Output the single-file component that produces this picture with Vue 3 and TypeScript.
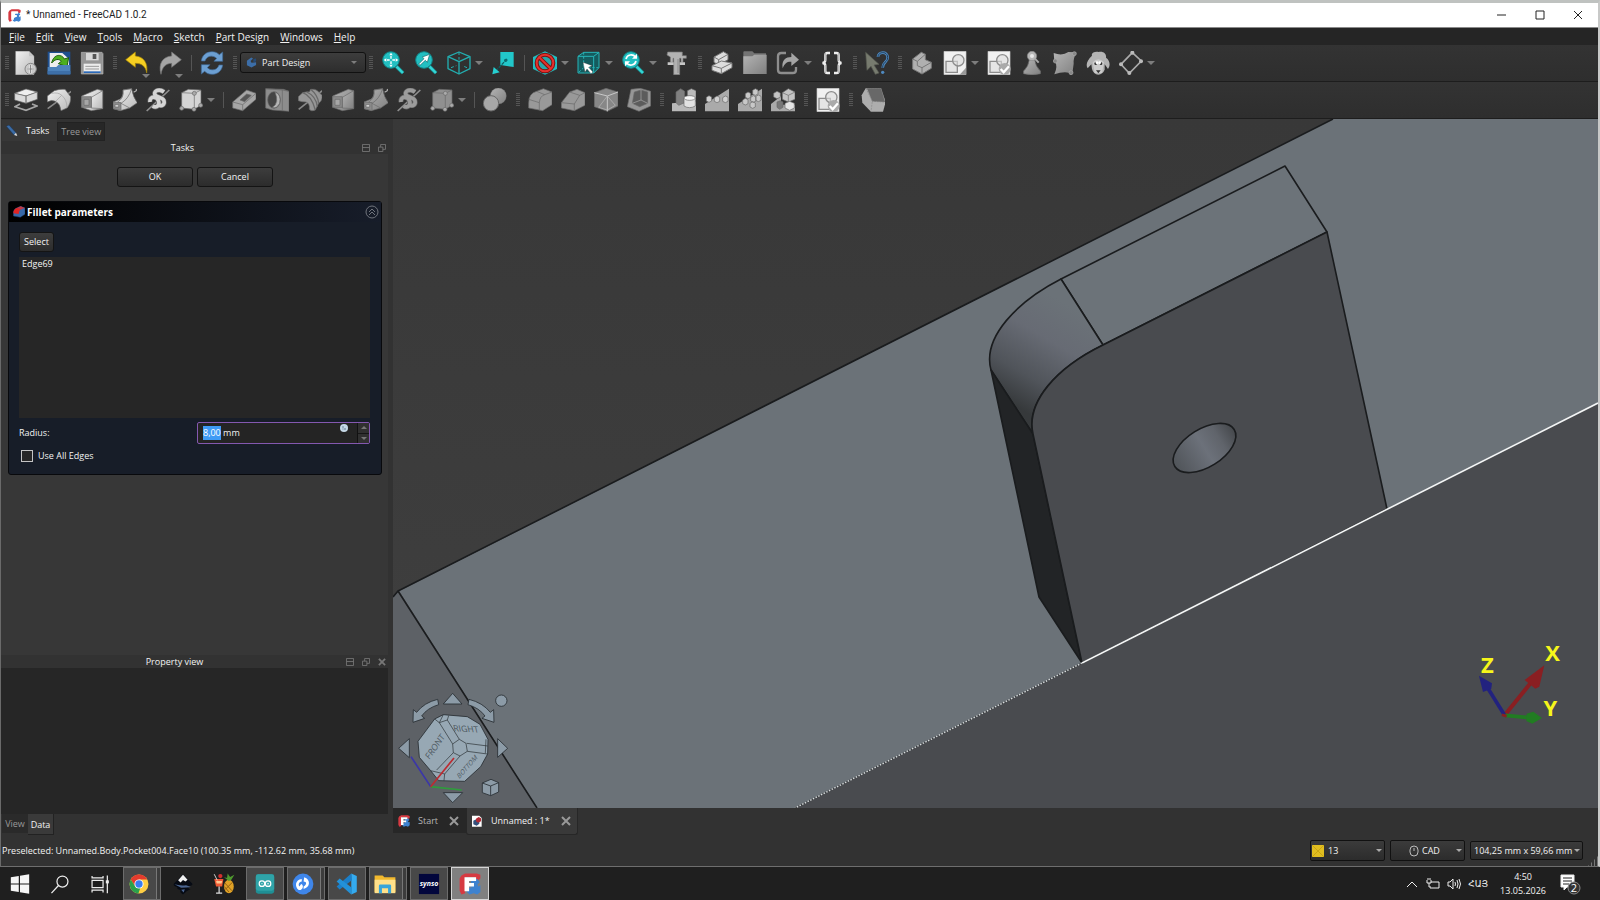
<script setup lang="ts">
import { onMounted, ref } from 'vue'

interface ToolItem {
  kind: 'grip' | 'sep' | 'tool' | 'workbench'
  icon?: string
  label?: string
  menu?: boolean
  under?: boolean
}

const grip: ToolItem = { kind: 'grip' }
const sep: ToolItem = { kind: 'sep' }
const tool = (icon: string, label: string, menu = false, under = false): ToolItem => ({ kind: 'tool', icon, label, menu, under })

const menus = ['File', 'Edit', 'View', 'Tools', 'Macro', 'Sketch', 'Part Design', 'Windows', 'Help']

const rows: ToolItem[][] = [
  [
    grip, tool('new', 'New'), tool('open', 'Open'), tool('save', 'Save'),
    grip, tool('undo', 'Undo', false, true), tool('redo', 'Redo', false, true), sep, tool('refresh', 'Refresh'),
    grip, { kind: 'workbench' },
    grip, tool('fitAll', 'Fit all'), tool('fitSel', 'Fit selection'), tool('iso', 'Isometric', true), tool('align', 'Align to selection'),
    sep, tool('style', 'Draw style', true), tool('selView', 'Selection view', true), tool('sync', 'Sync view', true), tool('caliper', 'Measure'),
    grip, tool('part', 'Create part'), tool('folder', 'Create group'), tool('share', 'Make link', true), tool('braces', 'Variable set'),
    grip, tool('whats', "What's this?"),
    grip, tool('body', 'Create body'), tool('sketch', 'Create sketch', true), tool('validate', 'Validate sketch'), tool('pawn', 'Check geometry'),
    tool('binder', 'Shape binder'), tool('sheep', 'Clone'), tool('datum', 'Datum', true),
  ],
  [
    grip, tool('pad', 'Pad'), tool('revolve', 'Revolution'), tool('loft', 'Additive loft'), tool('pipe', 'Additive pipe'), tool('helix', 'Additive helix'), tool('prim', 'Additive primitive', true),
    sep, tool('pocket', 'Pocket'), tool('hole', 'Hole'), tool('groove', 'Groove'), tool('loftCut', 'Subtractive loft'), tool('pipeCut', 'Subtractive pipe'), tool('helixCut', 'Subtractive helix'), tool('primCut', 'Subtractive primitive', true),
    sep, tool('bool', 'Boolean operation'),
    grip, tool('fillet', 'Fillet'), tool('chamfer', 'Chamfer'), tool('draft', 'Draft'), tool('thick', 'Thickness'),
    grip, tool('mirror', 'Mirrored'), tool('linear', 'Linear pattern'), tool('polar', 'Polar pattern'), tool('multi', 'Multi transform'),
    grip, tool('validate', 'Validate sketch'),
    grip, tool('refine', 'Refine shape'),
  ],
]

const block = (fill: string) =>
  `<g fill="${fill}" stroke="#686868" stroke-width="2">`
const loftShape = (f: string) =>
  `${block(f)}<path d="M5 24L52 4 68 8V62L34 68 5 58z"/><path d="M34 28L68 8V62L34 60z"/><path d="M5 26H34V58H5z" fill="#8a8a8a"/><path d="M12 34H27V52H12z" fill="#a6a6a6"/></g>`
const pipeShape = (f: string) =>
  `${block(f)}<path d="M30 6L56 2Q60 28 73 44L50 60 22 68 0 62V42L20 34Q32 26 30 6z"/><path d="M30 6Q34 30 14 42L24 46Q46 34 56 2z" fill-opacity=".5"/><path d="M24 46L50 60" fill="none"/><path d="M1 42L24 44V68L1 62z" fill="#8b8b8b"/><path d="M6 50H17V57H6z" fill="#ddd"/></g><path d="M62 12Q72 10 70 3" fill="none" stroke="#aaa" stroke-width="4"/>`
const helixBand = 'M54 12C38 0 20 10 28 22C36 30 58 28 54 46C50 56 38 54 36 46M12 42C10 22 34 24 38 40S28 60 20 54'
const helixShape = (f: string) =>
  `<path d="M2 69L70 6" stroke="#909090" stroke-width="5"/><g fill="none"><path d="${helixBand}" stroke="#666" stroke-width="15"/><path d="${helixBand}" stroke="${f}" stroke-width="11"/></g>`
const primShape = (f: string) =>
  `${block(f)}<path d="M8 14L28 4 66 6V52L46 64 8 60z"/><path d="M8 14L46 16 66 6M46 16V64" fill="none"/><circle cx="8" cy="61" r="6" fill="#aaa"/><circle cx="45" cy="64" r="6" fill="#aaa"/><circle cx="65" cy="52" r="6" fill="#aaa"/><circle cx="46" cy="16" r="6" fill="#aaa"/></g>`
const lens = (inner: string) =>
  `<path d="M46 46L66 66" stroke="#158c8e" stroke-width="11"/><path d="M46 46L66 66" stroke="#35d6d6" stroke-width="7"/><circle cx="30" cy="27" r="25" fill="#22bfc1" stroke="#128083" stroke-width="3"/>${inner}`
const page = `<path d="M3 1H69V71H3z" fill="#f1f1f1" stroke="#ccc" stroke-width="2"/><g fill="#ddd" fill-opacity=".6" stroke="#8d8d8d" stroke-width="4"><path d="M9 31H43V64H9z"/><circle cx="46" cy="28" r="17"/></g>`

const icons: Record<string, string> = {
  new: `<path d="M5 1H45L60 16V71H5z" fill="url(#light)" stroke="#bbb"/><path d="M45 1V16H60z" fill="#c5c5c5"/><circle cx="50" cy="54" r="17" fill="#c9c9c9" stroke="#888" stroke-width="3"/><path d="M50 42V66M38 54H62" stroke="#fff" stroke-width="6"/><path d="M50 42V66M38 54H62" stroke="#777" stroke-width="3"/>`,
  open: `<path d="M2 2H70V70H2z" fill="#1e4f8f"/><path d="M8 6H46L66 24V50H8z" fill="#eee"/><path d="M14 36C20 8 44 8 52 24L65 20 60 47 34 38 43 31C36 22 24 24 14 36z" fill="#4caf1f" stroke="#1d5c0c" stroke-width="3"/><path d="M2 48H28L34 42H70V70H2z" fill="#4c82bb"/><path d="M2 60H70V70H2z" fill="#3d6fa8"/>`,
  save: `<path d="M4 4H66L69 8V69H4z" fill="#969696" stroke="#b5b5b5" stroke-width="2"/><path d="M18 6H56V28H18z" fill="#d8d8d8"/><path d="M38 9H49V24H38z" fill="#555"/><path d="M11 38H62V66H11z" fill="#ececec"/><path d="M16 46H57M16 54H57" stroke="#999" stroke-width="3"/><path d="M11 61H62V66H11z" fill="#2b69b8"/>`,
  undo: `<path d="M2 26L31 3V15C56 17 70 36 65 66C62 46 50 37 31 37V49z" fill="#f6cf22" stroke="#a48708" stroke-width="2"/>`,
  redo: `<path d="M70 26L41 3V15C14 17 0 38 9 70C12 48 24 37 41 37V49z" fill="#a5a5a5" stroke="#777" stroke-width="2"/>`,
  refresh: `<g fill="#6c9fd2" stroke="#3f6894" stroke-width="2"><path d="M4 30C6 12 20 2 36 2C46 2 52 5 58 11L68 3V31H42L50 22C38 11 20 14 15 30z"/><path d="M68 42C66 60 52 70 36 70C26 70 20 67 14 61L4 69V41H30L22 50C34 61 52 58 57 42z"/></g>`,
  fitAll: lens(`<g stroke="#fff" stroke-width="4" fill="#fff"><path d="M30 15V39M18 27H42" stroke-dasharray="8 8"/><path d="M30 5L35 13H25zM30 49L25 41H35zM8 27L16 22V32zM52 27L44 32V22z" stroke="none"/></g>`),
  fitSel: lens(`<path d="M14 39L30 23 25 18 47 10 40 34 34 28 18 43z" fill="#fff" stroke="#12666a" stroke-width="2"/>`),
  iso: `<g fill="none" stroke="#23aeb0" stroke-width="4" stroke-linejoin="round"><path d="M36 3L69 17V53L36 69 3 53V17z"/><path d="M3 17L36 32 69 17M36 32V69"/><path d="M36 3V26M12 50L28 44M60 50L46 44" stroke-dasharray="9 6" stroke-width="3"/></g>`,
  align: `<path d="M28 3H68V48L28 42z" fill="#22c7ca"/><path d="M48 24L18 56" stroke="#0b5f62" stroke-width="4" stroke-dasharray="10 3"/><circle cx="44" cy="28" r="5" fill="#0c6c70"/><path d="M4 70L8 48 26 64z" fill="#26cfd1"/>`,
  style: `<path d="M36 1L72 18V54L36 71 0 54V18z" fill="#21bcc0"/><circle cx="36" cy="36" r="25" fill="#28a5aa" stroke="#7c1111" stroke-width="12"/><path d="M18 19L54 54" stroke="#7c1111" stroke-width="12"/><circle cx="36" cy="36" r="25" fill="none" stroke="#e5312d" stroke-width="6"/><path d="M18 18L54 54" stroke="#e5312d" stroke-width="6"/>`,
  selView: `<g fill="#155b5e" stroke="#28b5b8" stroke-width="3"><path d="M3 16L20 4H66V50L50 66H3z"/><path d="M3 16H50V66M50 16L66 4" fill="none"/><path d="M20 4V50H66M20 50L3 66" fill="none" stroke-dasharray="7 5"/></g><path d="M18 34L46 44 35 49 48 63 42 68 30 54 24 64z" fill="#fff" stroke="#222"/>`,
  sync: lens(`<g fill="none" stroke="#fff" stroke-width="5"><path d="M15 24C18 10 36 8 43 18M45 30C42 44 24 46 17 36"/></g><path d="M48 8V23H33zM12 46V31H27z" fill="#fff"/>`),
  caliper: `<path d="M8 3H52V14H64V22H54V34H48V22H44V71H26V22H24V34H16V18L6 12z" fill="#b2b2b2" stroke="#777" stroke-width="2"/><path d="M8 34H26V42H8zM44 34H60V42H44z" fill="#c6c6c6"/><path d="M39 26V68" stroke="#555" stroke-width="5" stroke-dasharray="2 4"/>`,
  part: `<g fill="#ddd" stroke="#777" stroke-width="3"><path d="M12 18L40 2 54 10V26L26 42 12 34z"/><path d="M12 18L26 26 54 10M26 26V42" fill="none"/><path d="M6 44L34 30 66 36V50L34 68 6 58z"/><path d="M6 44L34 52 66 36M34 52V68" fill="none"/></g>`,
  folder: `<path d="M1 4Q1 1 4 1H28L34 7H69V69H1z" fill="#747474"/><path d="M1 16H28L34 11H71V69H1z" fill="url(#mid)"/>`,
  share: `<path d="M30 6H16Q6 6 6 16V56Q6 66 16 66H50Q60 66 60 56V48" fill="none" stroke="#8e8e8e" stroke-width="7"/><path d="M20 52C16 26 30 18 46 18V5L69 26 46 45V32C34 31 26 36 20 52z" fill="#a5a5a5"/>`,
  braces: `<g fill="none" stroke="#eee" stroke-width="7"><path d="M30 6H22Q16 6 16 13V27Q16 36 7 36Q16 36 16 45V59Q16 66 22 66H30"/><path d="M42 6H50Q56 6 56 13V27Q56 36 65 36Q56 36 56 45V59Q56 66 50 66H42"/></g><path d="M16 6V30M16 42V66M56 6V30M56 42V66" stroke="#999" stroke-width="2"/>`,
  whats: `<path d="M2 4L42 40 27 42 42 66 31 70 18 46 6 58z" fill="#777b6f" stroke="#595c53" stroke-width="2"/><path d="M39 18C38 2 68 -2 68 20C68 34 53 32 53 50" fill="none" stroke="#4f89bf" stroke-width="8"/><path d="M39 18C38 2 68 -2 68 20C68 34 53 32 53 50" fill="none" stroke="#203d58" stroke-width="3"/><circle cx="53" cy="64" r="5" fill="#4f89bf"/>`,
  body: `<g fill="#b0b0b0" stroke="#777" stroke-width="3"><path d="M8 24L34 4 46 10V26L64 34V52L36 69 8 54z"/><path d="M8 24L22 31 46 10M22 31V44L36 50 64 34M36 50V69" fill="none"/></g>`,
  sketch: `${page}<path d="M50 71L69 50V71z" fill="#999"/>`,
  validate: `${page}<circle cx="53" cy="54" r="18" fill="#aaa"/><path d="M41 54L50 64 66 46" fill="none" stroke="#fff" stroke-width="7"/>`,
  pawn: `<path d="M28 26H44Q46 46 61 60V68Q36 74 11 68V60Q26 46 28 26z" fill="url(#mid)" stroke="#777" stroke-width="2"/><circle cx="36" cy="15" r="14" fill="#b7b7b7" stroke="#888" stroke-width="2"/><path d="M44 22L56 35" stroke="#aaa" stroke-width="6"/><circle cx="36" cy="15" r="6" fill="#e8e8e8"/>`,
  binder: `<path d="M2 6Q28 16 46 3L70 4Q60 24 62 38L58 68Q36 58 4 70Q16 44 4 30z" fill="url(#mid)"/><g fill="#888" stroke="#aaa" stroke-width="2"><circle cx="7" cy="30" r="6"/><circle cx="64" cy="8" r="6"/><circle cx="54" cy="65" r="6"/></g>`,
  sheep: `<path d="M18 14C14 4 30 0 38 3C54 0 62 10 60 20C72 28 74 44 66 54L56 40V56Q50 70 37 71Q22 70 18 54L16 40 5 52C-2 42 4 26 18 14z" fill="#b4b4b4"/><path d="M20 34Q37 16 54 34L48 66H26z" fill="#ccc"/><g fill="#333"><circle cx="29" cy="38" r="4"/><circle cx="45" cy="38" r="4"/><path d="M30 58H44L37 67z"/></g><circle cx="33" cy="35" r="4" fill="#fff"/><circle cx="41" cy="35" r="4" fill="#fff"/>`,
  datum: `<path d="M40 5L67 30 31 67 6 40z" fill="none" stroke="#aaa" stroke-width="5"/><g fill="#bbb"><circle cx="40" cy="5" r="6"/><circle cx="66" cy="31" r="6"/><circle cx="31" cy="66" r="6"/><circle cx="6" cy="40" r="6"/></g>`,
  pad: `${block('#dadada')}<path d="M2 16L36 3 70 12 36 24z" fill="#eee"/><path d="M2 16L36 24V46L2 36zM36 24L70 12V34L36 46z"/></g><path d="M18 48L3 56 36 67 69 54 54 48" fill="none" stroke="#a5a5a5" stroke-width="5"/>`,
  revolve: `<path d="M2 62L73 10" stroke="#8a8a8a" stroke-width="5"/>${block('url(#light)')}<path d="M1 24L22 8Q38 2 54 4L71 26Q72 46 60 60L42 68Q40 48 26 40Q12 34 1 42z"/><path d="M26 40L44 22Q34 12 14 16M44 22Q60 34 60 60" fill="none" stroke="#a0a0a0"/></g>`,
  loft: loftShape('url(#light)'),
  loftCut: loftShape('url(#mid)'),
  pipe: pipeShape('url(#light)'),
  pipeCut: pipeShape('url(#mid)'),
  helix: helixShape('#d5d5d5'),
  helixCut: helixShape('#9c9c9c'),
  prim: primShape('#d4d4d4'),
  primCut: primShape('#909090'),
  pocket: `${block('#a6a6a6')}<path d="M2 42L44 6 72 16V34L32 68 2 60z"/><path d="M2 42L32 50 72 16M32 50V68" fill="none"/><path d="M24 36L44 18 58 22 38 41z" fill="#555"/></g>`,
  hole: `${block('#8d8d8d')}<path d="M2 2L56 4 72 10V70L22 66 2 60z"/><path d="M2 2L52 6V68M52 6L72 10" fill="none"/><ellipse cx="27" cy="36" rx="19" ry="25" fill="#444"/><path d="M30 12Q50 20 44 46Q34 64 22 58Q44 46 30 12z" fill="#b5b5b5"/></g>`,
  groove: `<path d="M2 64L73 8" stroke="#888" stroke-width="5"/>${block('#969696')}<path d="M1 26L14 14Q30 10 34 12L38 4Q52 2 58 8L72 22Q74 38 62 46L52 66Q40 72 34 64Q36 46 24 42Q10 42 1 38z"/><path d="M14 14Q40 22 52 66M38 4Q60 22 62 46M26 12Q54 24 58 56" fill="none" stroke-width="4"/></g>`,
  bool: `<circle cx="46" cy="24" r="24" fill="url(#mid)" stroke="#777"/><circle cx="24" cy="46" r="23" fill="#a8a8a8" stroke="#666" stroke-width="3"/>`,
  fillet: `${block('#999')}<path d="M2 44Q2 16 26 10L46 2 72 12V50L44 68 2 60z"/><path d="M34 68V44Q36 24 50 20L72 12M34 44L2 34M50 20L26 10" fill="none"/></g>`,
  chamfer: `${block('#999')}<path d="M1 44L26 12 48 4 72 14V52L40 68 1 60z"/><path d="M40 68V48L56 22 72 14M40 48L1 44M56 22L26 12" fill="none"/></g>`,
  draft: `${block('#878787')}<path d="M1 14L36 1 72 12V54L40 70 1 56z"/><path d="M1 14L40 24 72 12M40 24V70" fill="none" stroke="#c8c8c8" stroke-width="3"/><path d="M40 24L14 58 40 66 64 52z" fill="none" stroke="#bbb"/></g>`,
  thick: `${block('#969696')}<path d="M12 4L40 1 71 10V54L36 70 1 56z"/><path d="M22 12L42 6 62 12V46L38 56 16 46z" fill="#5c5c5c"/><path d="M42 6V36L62 46M42 36L16 46" fill="none" stroke="#aaa"/></g>`,
  mirror: `<path d="M0 46L72 40V70H0z" fill="#b9b9b9"/>${block('#808080')}<path d="M12 12L26 2 38 10V44L20 52 12 44z"/><path d="M46 8L58 2 72 8V38H46z" fill="#bbb"/><path d="M36 30Q52 20 70 30V54Q52 64 36 54z" fill="#e2e2e2"/><ellipse cx="53" cy="30" rx="17" ry="7" fill="#f5f5f5"/></g>`,
  linear: `<path d="M0 48L72 2V70H0z" fill="#aaa"/>${block('#d0d0d0')}<path d="M4 28L12 23 20 27V39L12 43 4 39zM28 29L36 24 44 28V40L36 44 28 40zM53 29L61 24 69 28V40L61 44 53 40z"/></g>`,
  polar: `<path d="M0 48L72 2V70H0z" fill="#aaa"/>${block('#c8c8c8')}<path d="M14 36L22 31 30 35V47L22 51 14 47zM22 17L30 12 38 16V28L30 32 22 28zM44 7L52 2 60 6V18L52 22 44 18zM53 26L61 21 69 25V37L61 41 53 37zM36 46L44 41 52 45V57L44 61 36 57zM38 28L46 23 54 27V39L46 43 38 39z"/></g>`,
  multi: `<path d="M0 48L30 24V70H0zM30 50H72V70H30z" fill="#aaa"/>${block('#c4c4c4')}<path d="M34 14L52 2 72 12V34L52 42 34 34z"/><path d="M34 14L52 22 72 12M52 22V42" fill="none"/><path d="M8 16L18 10 28 15V28L18 32 8 27z"/><path d="M18 42L28 38 36 42V58L26 64 18 58z" fill="#777"/><path d="M42 46L56 40 70 46V60L56 67 42 60z" fill="#e5e5e5"/></g>`,
  refine: `<path d="M2 22L14 1H60L74 42 66 71H30L4 44z" fill="#adadad"/><path d="M18 1H60L72 42 34 40z" fill="#686868" stroke="#777" stroke-width="2" stroke-dasharray="5 3"/><path d="M15 1L34 40 30 71" fill="none" stroke="#888" stroke-width="2" stroke-dasharray="6 3"/>`,
  freecad: `<path d="M8 8L20 2H58L70 6V18L62 24 54 20V14H20V66L8 70 2 58V18z" fill="#d63a42"/><path d="M26 62V52L36 48H58L70 40V62L60 70 48 66 34 70z" fill="#3e82cf"/><path d="M40 24L60 20 68 30 60 38 66 48 50 54 38 46z" fill="#3e82cf"/><path d="M18 14H56V26H33V33H49V44H33V60H18z" fill="#fff"/>`,
  filletColor: `<path d="M2 44Q2 16 26 10L46 2 72 12V50L44 68 2 60z" fill="#3768a8" stroke="#1b3b66" stroke-width="3"/><path d="M2 44Q2 16 26 10L50 20Q36 24 34 48z" fill="#e02424"/><path d="M26 10L46 2 72 12 50 20z" fill="#c23a46"/>`,
  doc: `<path d="M6 4H50L64 18V70H6z" fill="#fff"/><path d="M14 34L34 24 50 32V52L34 64 14 56z" fill="#35517c"/><path d="M30 22L46 12 60 20V38L42 46 30 38z" fill="#b32b35"/>`,
  partDesign: `<path d="M6 24L34 4 46 10 30 26 36 38 66 34V52L36 69 6 54z" fill="#3c6ea8"/><path d="M48 14L66 8V30L48 34z" fill="#254a76"/>`,
  pen: `<path d="M2 8L18 0 60 46 48 60z" fill="#3c6ca6" stroke="#17355a" stroke-width="3"/><path d="M48 60L60 46 68 66z" fill="#ddd"/>`,
  start: `<path d="M6 14L32 10V34H6zM36 9L66 4V34H36zM6 38H32V62L6 58zM36 38H66V68L36 63z" fill="#f5f5f5"/>`,
  search: `<circle cx="44" cy="28" r="18" fill="none" stroke="#eee" stroke-width="4"/><path d="M31 41L8 66" stroke="#eee" stroke-width="4"/>`,
  taskview: `<g fill="none" stroke="#eee" stroke-width="4"><path d="M10 24H46V48H10zM10 10V16H46V10M10 64V56H46V64M60 8V66"/></g><path d="M55 24H65V34H55z" fill="#eee"/>`,
  chrome: `<circle cx="36" cy="36" r="31" fill="#ffce44"/><path d="M36 5A31 31 0 0 1 63 21H36L24 44 9 21A31 31 0 0 1 36 5z" fill="#e33b2e"/><path d="M9 21L25 46 40 50 34 67A31 31 0 0 1 9 21z" fill="#2aa14c"/><circle cx="36" cy="36" r="15" fill="#fff"/><circle cx="36" cy="36" r="12" fill="#3a7df0"/>`,
  inkscape: `<path d="M36 4L66 34Q70 41 54 43Q50 49 60 53Q46 58 36 70Q24 64 28 56Q14 54 18 47Q2 42 6 35z" fill="#070b14"/><path d="M36 6L51 22 44 28 36 23 28 31 20 24z" fill="#f0f0f0"/><path d="M8 37Q24 42 46 40L62 46Q50 48 30 48zM30 55L42 53 38 64z" fill="#4b6591"/>`,
  cocktail: `<path d="M4 20H34L30 44H10z" fill="#ef5a35"/><path d="M10 26H30L28 34H12z" fill="#ffc78f"/><path d="M20 44V64M10 66H30" stroke="#ddd" stroke-width="4"/><circle cx="24" cy="10" r="7" fill="#d32f2f"/><path d="M4 4L14 24" stroke="#ddd" stroke-width="3"/><ellipse cx="52" cy="44" rx="16" ry="22" fill="#dfa126"/><path d="M38 32L62 58M40 54L64 30M37 44L52 62" stroke="#8c5b12" stroke-width="3"/><path d="M52 26L36 14 46 16 48 2 56 13 70 6 60 22z" fill="#4f9a2e"/>`,
  arduino: `<rect x="6" y="4" width="60" height="64" rx="8" fill="#1f8f95"/><rect x="6" y="4" width="60" height="54" rx="8" fill="#2fa3a8"/><g fill="none" stroke="#fff" stroke-width="4"><circle cx="26" cy="35" r="9"/><circle cx="46" cy="35" r="9"/></g><path d="M23 35H29M43 35H49M46 32V38" stroke="#fff" stroke-width="2"/>`,
  cura: `<circle cx="36" cy="36" r="34" fill="#3f86ea"/><path d="M22 56C8 46 10 22 32 20V28C22 30 20 38 24 44L30 36C40 40 36 56 24 56z" fill="#fff"/><path d="M40 14C62 20 60 48 38 52V44C50 38 48 28 38 28z" fill="#fff"/>`,
  vscode: `<path d="M50 2L68 10V62L50 70z" fill="#34abf0"/><path d="M50 2L2 44 12 54 52 24z" fill="#1b7fc9"/><path d="M50 70L2 28 12 18 52 48z" fill="#2391d8"/>`,
  explorer: `<path d="M2 8H28L34 14H70V62H2z" fill="#f2b92e"/><path d="M2 22H70V66H2z" fill="#ffe08a"/><path d="M16 66V42Q16 38 20 38H52Q56 38 56 42V66H46V50H26V66z" fill="#38a5db"/>`,
  synso: `<path d="M3 3H69V69H3z" fill="#02063c"/><text x="36" y="43" text-anchor="middle" font-family="Open Sans, sans-serif" font-weight="700" font-style="italic" font-size="23" fill="#fff">synso</text>`,
}

const tasks = [
  { icon: 'start', label: 'Start', state: '' },
  { icon: 'search', label: 'Search', state: '' },
  { icon: 'taskview', label: 'Task view', state: '' },
  { icon: 'chrome', label: 'Chrome', state: 'open stacked' },
  { icon: 'inkscape', label: 'Inkscape', state: '' },
  { icon: 'cocktail', label: 'Cocktail', state: '' },
  { icon: 'arduino', label: 'Arduino', state: 'open' },
  { icon: 'cura', label: 'Slicer', state: 'open stacked' },
  { icon: 'vscode', label: 'Code', state: 'open' },
  { icon: 'explorer', label: 'Explorer', state: 'open stacked' },
  { icon: 'synso', label: 'Synso', state: 'open' },
  { icon: 'freecad', label: 'FreeCAD', state: 'open active' },
]

const radius = ref('8,00 mm')
const allEdges = ref(false)
const radiusInput = ref<HTMLInputElement | null>(null)

onMounted(() => {
  radiusInput.value?.focus()
  radiusInput.value?.setSelectionRange(0, 4)
})
</script>

<template>
  <div class="screen">
    <svg class="defs" width="0" height="0" aria-hidden="true">
      <defs>
        <linearGradient id="light" x1="0" y1="0" x2="1" y2="1"><stop offset="0" stop-color="#f2f2f2" /><stop offset="1" stop-color="#b8b8b8" /></linearGradient>
        <linearGradient id="mid" x1="0" y1="0" x2="1" y2="1"><stop offset="0" stop-color="#b4b4b4" /><stop offset="1" stop-color="#808080" /></linearGradient>
      </defs>
    </svg>

    <div class="window">
      <header class="titlebar">
        <svg class="app-icon" viewBox="0 0 72 72" v-html="icons.freecad" />
        <span class="title">* Unnamed - FreeCAD 1.0.2</span>
        <div class="win-buttons">
          <button aria-label="Minimize"><svg viewBox="0 0 10 10"><path d="M0 5H9" /></svg></button>
          <button aria-label="Maximize"><svg viewBox="0 0 10 10"><path d="M1 1H9V9H1z" /></svg></button>
          <button aria-label="Close"><svg viewBox="0 0 10 10"><path d="M1 1L9 9M9 1L1 9" /></svg></button>
        </div>
      </header>

      <nav class="menubar">
        <button v-for="m in menus" :key="m"><u>{{ m[0] }}</u>{{ m.slice(1) }}</button>
      </nav>

      <div v-for="(row, r) in rows" :key="r" class="toolbar" role="toolbar">
        <template v-for="(item, i) in row" :key="i">
          <span v-if="item.kind === 'grip'" class="grip" />
          <span v-else-if="item.kind === 'sep'" class="sep" />
          <div v-else-if="item.kind === 'workbench'" class="workbench">
            <svg viewBox="0 0 72 72" v-html="icons.partDesign" />
            <select aria-label="Workbench"><option>Part Design</option></select>
            <i class="caret" />
          </div>
          <button v-else class="tool" :class="{ menu: item.menu }" :aria-label="item.label">
            <svg viewBox="0 0 72 72" v-html="icons[item.icon!]" />
            <i v-if="item.menu" class="caret" />
            <i v-if="item.under" class="caret under" />
          </button>
        </template>
      </div>

      <main class="main">
        <aside class="side">
          <div class="side-tabs">
            <button class="side-tab on"><svg viewBox="0 0 72 72" v-html="icons.pen" />Tasks</button>
            <button class="side-tab">Tree view</button>
          </div>
          <div class="dock-title">
            <h2>Tasks</h2>
            <div class="dock-buttons">
              <button aria-label="Collapse"><svg viewBox="0 0 9 9"><path d="M.5.5H8.500V8.500H.5zM.5 4H8.500" /></svg></button>
              <button aria-label="Float"><svg viewBox="0 0 9 9"><path d="M.5 3.500H5.500V8.500H.5zM3 3.500V.5H8.500V6H5.500" /></svg></button>
            </div>
          </div>
          <section class="task-area">
            <div class="dialog-buttons">
              <button class="push">OK</button>
              <button class="push">Cancel</button>
            </div>
            <div class="group">
              <div class="group-head">
                <svg class="head-icon" viewBox="0 0 72 72" v-html="icons.filletColor" />
                <h3>Fillet parameters</h3>
                <button aria-label="Collapse group">
                  <svg viewBox="0 0 14 14"><circle cx="7" cy="7" r="6" /><path d="M4 7L7 4 10 7M4 10L7 7 10 10" /></svg>
                </button>
              </div>
              <div class="group-body">
                <button class="push small">Select</button>
                <ul class="edges"><li>Edge69</li></ul>
                <div class="field">
                  <label for="radius">Radius:</label>
                  <div class="spin">
                    <input id="radius" ref="radiusInput" v-model="radius" type="text" />
                    <svg class="fx" viewBox="0 0 8 8"><circle cx="4" cy="4" r="4" fill="#c5d8e6" /><path d="M2 3H4M3 2V6M4 4L6 6M6 4L4 6" stroke="#61798d" stroke-width=".5" fill="none" /></svg>
                    <div class="steps">
                      <button aria-label="Increase"><i class="up" /></button>
                      <button aria-label="Decrease"><i class="down" /></button>
                    </div>
                  </div>
                </div>
                <label class="check"><input v-model="allEdges" type="checkbox" />Use All Edges</label>
              </div>
            </div>
          </section>
          <div class="dock-title">
            <h2>Property view</h2>
            <div class="dock-buttons">
              <button aria-label="Collapse"><svg viewBox="0 0 9 9"><path d="M.5.5H8.500V8.500H.5zM.5 4H8.500" /></svg></button>
              <button aria-label="Float"><svg viewBox="0 0 9 9"><path d="M.5 3.500H5.500V8.500H.5zM3 3.500V.5H8.500V6H5.500" /></svg></button>
              <button aria-label="Close"><svg viewBox="0 0 9 9"><path class="bold" d="M1 1L8 8M8 1L1 8" /></svg></button>
            </div>
          </div>
          <div class="property-body" />
          <div class="property-tabs">
            <button>View</button>
            <button class="on">Data</button>
          </div>
        </aside>

        <section class="work">
          <svg class="viewport" viewBox="393 119 1205 689" preserveAspectRatio="xMidYMid slice" role="img" aria-label="3D view">
            <defs>
              <linearGradient id="backdrop" x1="0" y1="0" x2="0" y2="1"><stop offset="0" stop-color="#383838" /><stop offset="1" stop-color="#404040" /></linearGradient>
              <linearGradient id="round" gradientUnits="userSpaceOnUse" x1="1012" y1="404" x2="1070" y2="306">
                <stop offset="0" stop-color="#36393b" /><stop offset=".28" stop-color="#50545a" /><stop offset=".65" stop-color="#676b74" /><stop offset="1" stop-color="#6b7278" />
              </linearGradient>
              <linearGradient id="bore"><stop offset="0" stop-color="#505459" /><stop offset=".5" stop-color="#6c717a" /><stop offset=".75" stop-color="#60646b" /><stop offset="1" stop-color="#45484c" /></linearGradient>
            </defs>
            <rect x="393" y="119" width="1205" height="689" fill="url(#backdrop)" />
            <path d="M399 591L1333 119H1598V403L795 808H537z" fill="#6b7278" />
            <path d="M393 597L399 591 537 808H393z" fill="#5d6166" />
            <path d="M795 808L1598 403V808z" fill="#494b4f" />
            <g stroke="#1a1c1e" stroke-width="1.600" stroke-linejoin="round">
              <path d="M393 597L398 591L1333 119M398 591L537 808" fill="none" />
              <path d="M1061 279L1285 166 1327 232 1103 345z" fill="#6c7379" />
              <path d="M1061 279C1018 301 982 337 991 370L1033 434C1026 402 1056 368 1103 345z" fill="url(#round)" />
              <path d="M991 370L1033 434 1082 663 1039 597z" fill="#222426" />
              <path d="M1103 345L1327 232 1387 509 1082 663 1033 434C1026 402 1056 368 1103 345z" fill="#494b4f" />
              <ellipse cx="1204.500" cy="448" rx="35" ry="19" transform="rotate(-32 1204.500 448)" fill="url(#bore)" />
            </g>
            <path d="M1082 663L1598 403" stroke="#f4f6f6" stroke-width="1.600" />
            <path d="M1082 663L795 808" stroke="#3a3d40" stroke-width="1.200" />
            <path d="M1082 663L795 808" stroke="#d8dcdd" stroke-width="1.400" stroke-dasharray="1.500 1.500" />

            <g transform="translate(380 670) scale(.3333)" stroke="#272d31" stroke-width="2.500" fill="#8c9ba7" stroke-linejoin="round">
              <path d="M218 70L246 102H190zM218 398L190 368H248zM56 235L88 206V263zM383 235L353 206V262z" />
              <path d="M173 88L176 104Q142 114 125 138L134 145 99 157 100 119 110 127Q132 98 173 88z" />
              <path d="M267 88L264 104Q298 114 315 138L306 145 342 157 341 119 331 127Q308 98 267 88z" />
              <circle cx="364" cy="92" r="17" />
              <path d="M307 339L333 328 356 338V366L332 377 307 368z" />
              <path d="M307 339L332 348 356 338M332 348V377" fill="none" />
              <path d="M164 147L190 134 262 140 300 163 324 208 323 252 302 290 254 334 176 332 152 302 118 262 114 214z" fill="#97a8b4" />
              <g fill="none" stroke-width="2">
                <path d="M164 147L178 158 202 150 206 137M178 158L218 222 238 208 202 150M238 208L258 220 262 244 240 258 220 248 218 222M260 220L323 228M262 244L322 252M240 258L194 312 152 302M220 248L170 300M194 312L192 332M318 208L316 250M190 134L178 158" />
              </g>
              <g class="cube-text">
                <text transform="translate(148 270) rotate(-55) skewX(-8)">FRONT</text>
                <text transform="translate(222 184) rotate(3) skewX(16)">RIGHT</text>
                <text transform="translate(238 328) rotate(-49) skewX(-18)" class="tight">BOTTOM</text>
              </g>
              <g fill="none" stroke-width="5">
                <path d="M93 260L152 350" stroke="#3b36a8" /><path d="M152 350L245 360" stroke="#2f9c3c" /><path d="M152 350L222 264" stroke="#bd2b30" />
              </g>
            </g>

            <g transform="translate(1280 620) scale(.3333)">
              <path d="M674 286L755 185" stroke="#8a1f22" stroke-width="12" /><path d="M793 136L778 200 766 206 734 180z" fill="#8a1f22" />
              <path d="M674 286L625 207" stroke="#22227f" stroke-width="11" /><path d="M597 167L636 190 634 206 609 216z" fill="#22227f" />
              <path d="M676 286L748 293" stroke="#217c22" stroke-width="11" /><path d="M740 281L760 275 786 294 757 311 739 303z" fill="#217c22" />
              <path d="M666 284L680 289" stroke="#8a1f22" stroke-width="8" />
              <g class="axis-text"><text x="818" y="124">X</text><text x="811" y="289">Y</text><text x="622" y="158">Z</text></g>
            </g>
          </svg>
          <div class="doc-tabs">
            <div class="doc-tab"><svg viewBox="0 0 72 72" v-html="icons.freecad" /><span>Start</span><button aria-label="Close Start"><svg viewBox="0 0 10 10"><path d="M1 1L9 9M9 1L1 9" /></svg></button></div>
            <div class="doc-tab on"><svg viewBox="0 0 72 72" v-html="icons.doc" /><span>Unnamed : 1*</span><button aria-label="Close Unnamed"><svg viewBox="0 0 10 10"><path d="M1 1L9 9M9 1L1 9" /></svg></button></div>
          </div>
        </section>
      </main>

      <footer class="status">
        <span class="message">Preselected: Unnamed.Body.Pocket004.Face10 (100.35 mm, -112.62 mm, 35.68 mm)</span>
        <div class="status-box notes">
          <svg viewBox="0 0 12 12"><path d="M0 0H12V12H0z" fill="#e0bd20" /><path d="M0 0L6 6 12 0M0 12L6 6 12 12" stroke="#c9a512" fill="none" /></svg>
          <select aria-label="Notifications"><option>13</option></select><i class="caret" />
        </div>
        <div class="status-box mouse">
          <svg viewBox="0 0 12 12"><rect x="2" y="1" width="8" height="10" rx="4" fill="none" stroke="#bbb" /><path d="M6 3V6" stroke="#bbb" /></svg>
          <select aria-label="Navigation style"><option>CAD</option></select><i class="caret" />
        </div>
        <div class="status-box dims"><select aria-label="Dimensions"><option>104,25 mm x 59,66 mm</option></select><i class="caret" /></div>
        <span class="size-grip" />
      </footer>
    </div>

    <div class="taskbar">
      <button v-for="t in tasks" :key="t.label" class="task" :class="t.state" :aria-label="t.label">
        <svg viewBox="0 0 72 72" v-html="icons[t.icon]" />
      </button>
      <div class="tray">
        <button aria-label="Hidden icons"><svg viewBox="0 0 14 14"><path d="M2 10L7 5 12 10" /></svg></button>
        <button aria-label="Battery"><svg viewBox="0 0 14 14"><path d="M5 5H13V11H4V9M1 3V6H5V3M2 1V3M4 1V3M3 6V10" /></svg></button>
        <button aria-label="Volume"><svg viewBox="0 0 14 14"><path d="M1 5H3L6 2V12L3 9H1zM8 5Q9 7 8 9M10 3Q12 7 10 11M12 2Q15 7 12 12" /></svg></button>
        <button class="lang">ՀԱՅ</button>
        <button class="clock"><span>4:50</span><span>13.05.2026</span></button>
        <button class="notify" aria-label="Notifications">
          <svg viewBox="0 0 22 22"><path d="M1 1H14V13H7L4 16V13H1z" fill="#fff" /><path d="M3 4H12M3 7H12M3 10H9" stroke="#222" fill="none" /><circle cx="14" cy="14" r="6" fill="#333" stroke="#888" /><text x="14" y="18" text-anchor="middle">2</text></svg>
        </button>
      </div>
    </div>
  </div>
</template>

<style>
body {
  margin: 0;
  background: #1e1e1e;
}
</style>

<style scoped>
* {
  box-sizing: border-box;
}
.screen {
  display: flex;
  flex-direction: column;
  min-height: 100vh;
  font: 9px/14px "Open Sans", "Noto Sans", sans-serif;
  color: #f2f2f2;
}
.defs {
  position: absolute;
}
button, input, select {
  font: inherit;
  color: inherit;
  margin: 0;
  padding: 0;
  border: 0;
  background: none;
  outline: none;
}
select {
  appearance: none;
}
h2, h3, ul {
  margin: 0;
  padding: 0;
  font-size: 9px;
}
svg {
  display: block;
  flex: none;
}
.window {
  flex: 1;
  display: flex;
  flex-direction: column;
  background: #323232;
  border: solid;
  border-width: 3px 2px 1px 1px;
  border-color: #bfc2c0 #c8c9c8 #6e6e6e #6a6a6a;
}
.titlebar {
  display: flex;
  align-items: center;
  height: 25px;
  padding-left: 7px;
  background: #fff;
  border-bottom: 1px solid #8a8a8a;
  color: #222;
}
.app-icon {
  width: 13px;
  height: 13px;
}
.title {
  flex: 1;
  margin-left: 5px;
  font-family: Roboto, sans-serif;
  font-size: 10px;
}
.win-buttons {
  display: flex;
  padding-right: 1px;
}
.win-buttons button {
  display: flex;
  justify-content: center;
  width: 38px;
}
.win-buttons svg {
  width: 10px;
  height: 10px;
  fill: none;
  stroke: #222;
}
.menubar {
  display: flex;
  gap: 11px;
  height: 17px;
  padding-left: 8px;
  background: #252525;
  font-size: 10px;
}
.menubar button {
  height: 17px;
  line-height: 16px;
}
.toolbar {
  display: flex;
  align-items: center;
  height: 37px;
  padding-bottom: 1px;
  background: linear-gradient(#333, #2e2e2e);
  border-bottom: 1px solid #1d1d1d;
}
.grip {
  width: 12px;
  height: 13px;
  padding: 0 4px;
  background: linear-gradient(#555 1px, transparent 1px) 0 0 / 4px 2px repeat-y content-box content-box;
}
.grip:first-child {
  width: 9px;
  padding: 0 1px 0 4px;
}
.sep {
  width: 9px;
  height: 16px;
  background: linear-gradient(#555, #555) 4px 0 / 1px 100% no-repeat;
}
.tool {
  position: relative;
  display: flex;
  align-items: center;
  width: 33px;
  height: 28px;
  padding: 0 5px 0 4px;
}
.tool.menu {
  width: 44px;
}
.tool svg {
  width: 24px;
  height: 24px;
}
.caret {
  flex: none;
  border: solid transparent;
  border-width: 4px 4px 0;
  border-top-color: #7d7d7d;
}
.tool .caret {
  margin-left: 4px;
}
.tool .caret.under {
  position: absolute;
  right: 4px;
  bottom: -1px;
}
.workbench {
  display: flex;
  align-items: center;
  width: 126px;
  height: 21px;
  margin: 0 -1px;
  padding: 0 8px 0 5px;
  border: 1px solid #111;
  border-radius: 3px;
  background: linear-gradient(#3d3d3d, #2d2d2d);
}
.workbench svg {
  width: 11px;
  height: 11px;
}
.workbench select {
  flex: 1;
  padding-left: 5px;
}
.workbench .caret {
  border-width: 3px 3px 0;
}
.main {
  flex: 1;
  display: flex;
}
.side {
  display: flex;
  flex-direction: column;
  width: 392px;
  padding-right: 5px;
}
.side-tabs {
  display: flex;
  align-items: flex-end;
  height: 22px;
  padding-left: 1px;
}
.side-tab {
  height: 19px;
  padding: 0 3px;
  background: #272727;
  border: 1px solid #222;
  color: #999;
}
.side-tab.on {
  display: flex;
  align-items: center;
  gap: 8px;
  height: 21px;
  padding: 0 7px 0 3px;
  background: #373737;
  border-color: #373737;
  color: #f2f2f2;
}
.side-tab svg {
  width: 12px;
  height: 12px;
}
.dock-title {
  display: flex;
  align-items: center;
  height: 13px;
  padding: 0 2px;
}
.dock-title h2 {
  flex: 1;
  text-align: center;
  font-weight: 400;
}
.dock-buttons {
  display: flex;
  gap: 8px;
}
.dock-buttons svg {
  width: 8px;
  height: 8px;
  fill: none;
  stroke: #777;
}
.dock-buttons .bold {
  stroke-width: 2;
}
.task-area {
  flex: 1;
  padding: 13px 6px 0 7px;
  background: #373737;
}
.dialog-buttons {
  display: flex;
  justify-content: center;
  gap: 4px;
}
.push {
  width: 76px;
  height: 20px;
  line-height: 18px;
  border: 1px solid #141414;
  border-radius: 3px;
  background: linear-gradient(#3d3d3d, #2c2c2c);
}
.push.small {
  width: 35px;
}
.group {
  margin-top: 14px;
  background: #171d28;
  border: 1px solid #08090c;
  border-radius: 3px;
}
.group-head {
  display: flex;
  align-items: center;
  height: 20px;
  padding: 0 2px 0 4px;
  background: linear-gradient(90deg, #000, #171d2a);
}
.head-icon {
  width: 12px;
  height: 12px;
}
.group-head h3 {
  flex: 1;
  margin-left: 2px;
  color: #fff;
  font-size: 10px;
  font-weight: 700;
}
.group-head button svg {
  width: 14px;
  height: 14px;
  fill: none;
  stroke: #70747c;
}
.group-body {
  padding: 10px 11px 11px 10px;
}
.edges {
  height: 161px;
  margin-top: 5px;
  padding-left: 3px;
  background: #262626;
  list-style: none;
}
.field {
  display: flex;
  align-items: center;
  height: 22px;
  margin-top: 4px;
}
.field label {
  flex: 1;
}
.spin {
  display: flex;
  align-items: center;
  width: 173px;
  height: 22px;
  padding-left: 5px;
  border: 1px solid #8458b0;
  border-radius: 2px;
  background: #242424;
}
.spin input {
  flex: 1;
  min-width: 0;
  caret-color: transparent;
}
.spin input::selection {
  background: #3f9bf5;
  color: #fff;
}
.fx {
  width: 8px;
  height: 8px;
  margin: 0 9px 10px 0;
}
.steps {
  display: flex;
  flex-direction: column;
  width: 12px;
  height: 20px;
  border-left: 1px solid #111;
}
.steps button {
  flex: 1;
  display: flex;
  align-items: center;
  justify-content: center;
  background: #303030;
}
.steps button + button {
  border-top: 1px solid #161616;
}
.up, .down {
  border: solid transparent;
  border-width: 0 3px 3px;
  border-bottom-color: #777;
}
.down {
  border-width: 3px 3px 0;
  border-top-color: #777;
}
.check {
  display: flex;
  align-items: center;
  gap: 5px;
  height: 14px;
  margin-top: 5px;
  padding-left: 2px;
}
.check input {
  appearance: none;
  width: 12px;
  height: 12px;
  border: 1px solid #c4c4c4;
  background: #262626;
}
.property-body {
  height: 146px;
  background: #262626;
}
.property-tabs {
  display: flex;
  align-items: flex-start;
  height: 21px;
  padding-left: 1px;
}
.property-tabs button {
  width: 26px;
  height: 19px;
  background: #2a2a2a;
  color: #999;
}
.property-tabs .on {
  height: 21px;
  padding-top: 2px;
  background: #3a3a3a;
  border: solid #222;
  border-width: 0 1px 1px 0;
  color: #f2f2f2;
}
.work {
  flex: 1;
  display: flex;
  flex-direction: column;
  min-width: 0;
}
.viewport {
  flex: 1 1 0;
  width: 100%;
  min-height: 0;
}
.cube-text {
  font: 26px "Open Sans", sans-serif;
  fill: #4b565e;
  stroke: none;
}
.cube-text .tight {
  font-size: 20px;
}
.axis-text {
  font: 700 66px "Open Sans", sans-serif;
  fill: #f6f61a;
  text-anchor: middle;
}
.doc-tabs {
  display: flex;
  align-items: flex-start;
  height: 27px;
}
.doc-tab {
  display: flex;
  align-items: center;
  height: 25px;
  padding: 0 7px 0 5px;
  background: #272727;
  color: #b5b5b5;
}
.doc-tab.on {
  height: 27px;
  padding: 0 6px 0 4px;
  background: #393939;
  border: 1px solid #272727;
  border-top: 0;
  border-radius: 0 0 3px 3px;
  color: #f2f2f2;
}
.doc-tab > svg {
  width: 12px;
  height: 12px;
}
.doc-tab span {
  margin: 0 11px 0 8px;
}
.doc-tab button svg {
  width: 10px;
  height: 10px;
  stroke: #999;
  stroke-width: 2;
}
.status {
  display: flex;
  align-items: center;
  gap: 5px;
  height: 31px;
  padding-left: 1px;
}
.message {
  flex: 1;
}
.status-box {
  display: flex;
  align-items: center;
  width: 75px;
  height: 21px;
  padding: 0 2px 0 1px;
  border: 1px solid #111;
  border-radius: 2px;
  background: linear-gradient(#3b3b3b, #2c2c2c);
}
.status-box svg {
  width: 12px;
  height: 12px;
}
.status-box select {
  flex: 1;
  min-width: 0;
  padding-left: 4px;
}
.status-box .caret {
  border-width: 3px 3px 0;
  border-top-color: #aaa;
}
.status-box.mouse {
  padding-left: 17px;
}
.status-box.mouse select {
  padding-left: 2px;
}
.status-box.dims {
  width: 113px;
  height: 19px;
  padding-left: 0;
}
.status-box.dims select {
  padding-left: 3px;
}
.size-grip {
  align-self: flex-end;
  width: 10px;
  height: 10px;
  background: repeating-linear-gradient(90deg, #777 0 1px, transparent 1px 3px);
  clip-path: polygon(100% 0, 100% 100%, 0 100%);
}
.taskbar {
  display: flex;
  height: 33px;
  background: #1f1f1f;
}
.task {
  display: flex;
  align-items: center;
  justify-content: center;
  width: 38px;
  margin-right: 3px;
}
.task:nth-child(-n+3) {
  width: 40px;
  margin-right: 0;
}
.task:nth-child(4) {
  margin-left: 3px;
}
.task svg {
  width: 22px;
  height: 22px;
}
.task.open {
  background: #484848;
  border: 1px solid #6c6c6c;
}
.task.stacked {
  padding-right: 6px;
  background: linear-gradient(90deg, #484848 0 32px, #777 32px 33px, #3c3c3c 33px);
}
.task.active {
  background: #808080;
  border-color: #d5d5d5;
}
.tray {
  flex: 1;
  display: flex;
  align-items: center;
  justify-content: flex-end;
  padding-right: 18px;
  color: #f2f2f2;
}
.tray > button {
  margin-right: 7px;
}
.tray svg {
  width: 14px;
  height: 14px;
  fill: none;
  stroke: #eee;
}
.tray > .lang {
  margin-right: 12px;
  font-family: "DejaVu Sans", sans-serif;
}
.tray > .clock {
  display: flex;
  flex-direction: column;
  margin: 0 14px 0 0;
  text-align: center;
}
.tray > .notify {
  margin: 3px 0 0;
}
.notify svg {
  width: 22px;
  height: 22px;
}
.notify text {
  font-size: 11px;
  fill: #fff;
  stroke: none;
}
</style>
